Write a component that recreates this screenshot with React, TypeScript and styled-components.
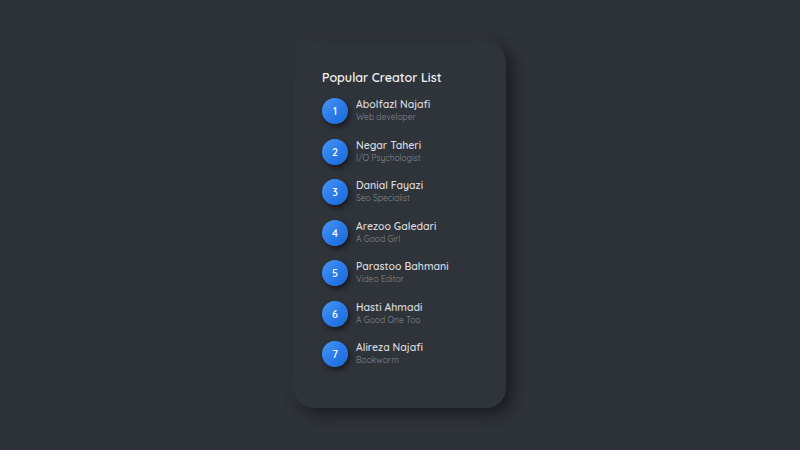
import styled, { createGlobalStyle } from 'styled-components';

const GlobalStyle = createGlobalStyle`
  html, body {
    margin: 0;
    padding: 0;
    background: #2e3239;
  }
  body {
    font-family: "Quicksand", "Lato", "Noto Sans", sans-serif;
  }
`;

const Page = styled.div`
  width: 800px;
  height: 450px;
  display: flex;
  align-items: flex-start;
  justify-content: center;
  padding-top: 42px;
  box-sizing: border-box;
  background: #2e3239;
`;

const Card = styled.div`
  width: 212px;
  height: 366px;
  box-sizing: border-box;
  padding: 27px 0 0 28px;
  border-radius: 20px;
  background: #2f333a;
  box-shadow: 6px 6px 14px rgba(20, 22, 26, 0.75), -4px -4px 10px rgba(60, 66, 74, 0.35);
`;

const Title = styled.h2`
  margin: 0 0 13px;
  font-size: 12.5px;
  font-weight: 600;
  color: #f2f3f5;
`;

const List = styled.ul`
  list-style: none;
  margin: 0;
  padding: 0;
  display: flex;
  flex-direction: column;
  gap: 14.5px;
`;

const Row = styled.li`
  display: flex;
  align-items: center;
  gap: 8px;
`;

const Badge = styled.div`
  width: 26px;
  height: 26px;
  border-radius: 50%;
  flex-shrink: 0;
  display: flex;
  align-items: center;
  justify-content: center;
  background: linear-gradient(135deg, #4b97f5 0%, #2a7ce9 50%, #1c69d8 100%);
  box-shadow: 2px 3px 5px rgba(15, 17, 20, 0.7);
  color: #ffffff;
  font-size: 10.5px;
  font-weight: 600;
`;

const Info = styled.div`
  display: flex;
  flex-direction: column;
  margin-top: -2px;
`;

const Name = styled.div`
  font-size: 10.5px;
  font-weight: 600;
  color: #d7d9dd;
  line-height: 13px;
`;

const Role = styled.div`
  font-size: 8.5px;
  color: #858a91;
  line-height: 11px;
`;

const creators = [
  { name: 'Abolfazl Najafi', role: 'Web developer' },
  { name: 'Negar Taheri', role: 'I/O Psychologist' },
  { name: 'Danial Fayazi', role: 'Seo Specialist' },
  { name: 'Arezoo Galedari', role: 'A Good Girl' },
  { name: 'Parastoo Bahmani', role: 'Video Editor' },
  { name: 'Hasti Ahmadi', role: 'A Good One Too' },
  { name: 'Alireza Najafi', role: 'Bookworm' },
];

export default function App() {
  return (
    <>
      <GlobalStyle />
      <Page>
        <Card>
          <Title>Popular Creator List</Title>
          <List>
            {creators.map((c, i) => (
              <Row key={c.name}>
                <Badge>{i + 1}</Badge>
                <Info>
                  <Name>{c.name}</Name>
                  <Role>{c.role}</Role>
                </Info>
              </Row>
            ))}
          </List>
        </Card>
      </Page>
    </>
  );
}
